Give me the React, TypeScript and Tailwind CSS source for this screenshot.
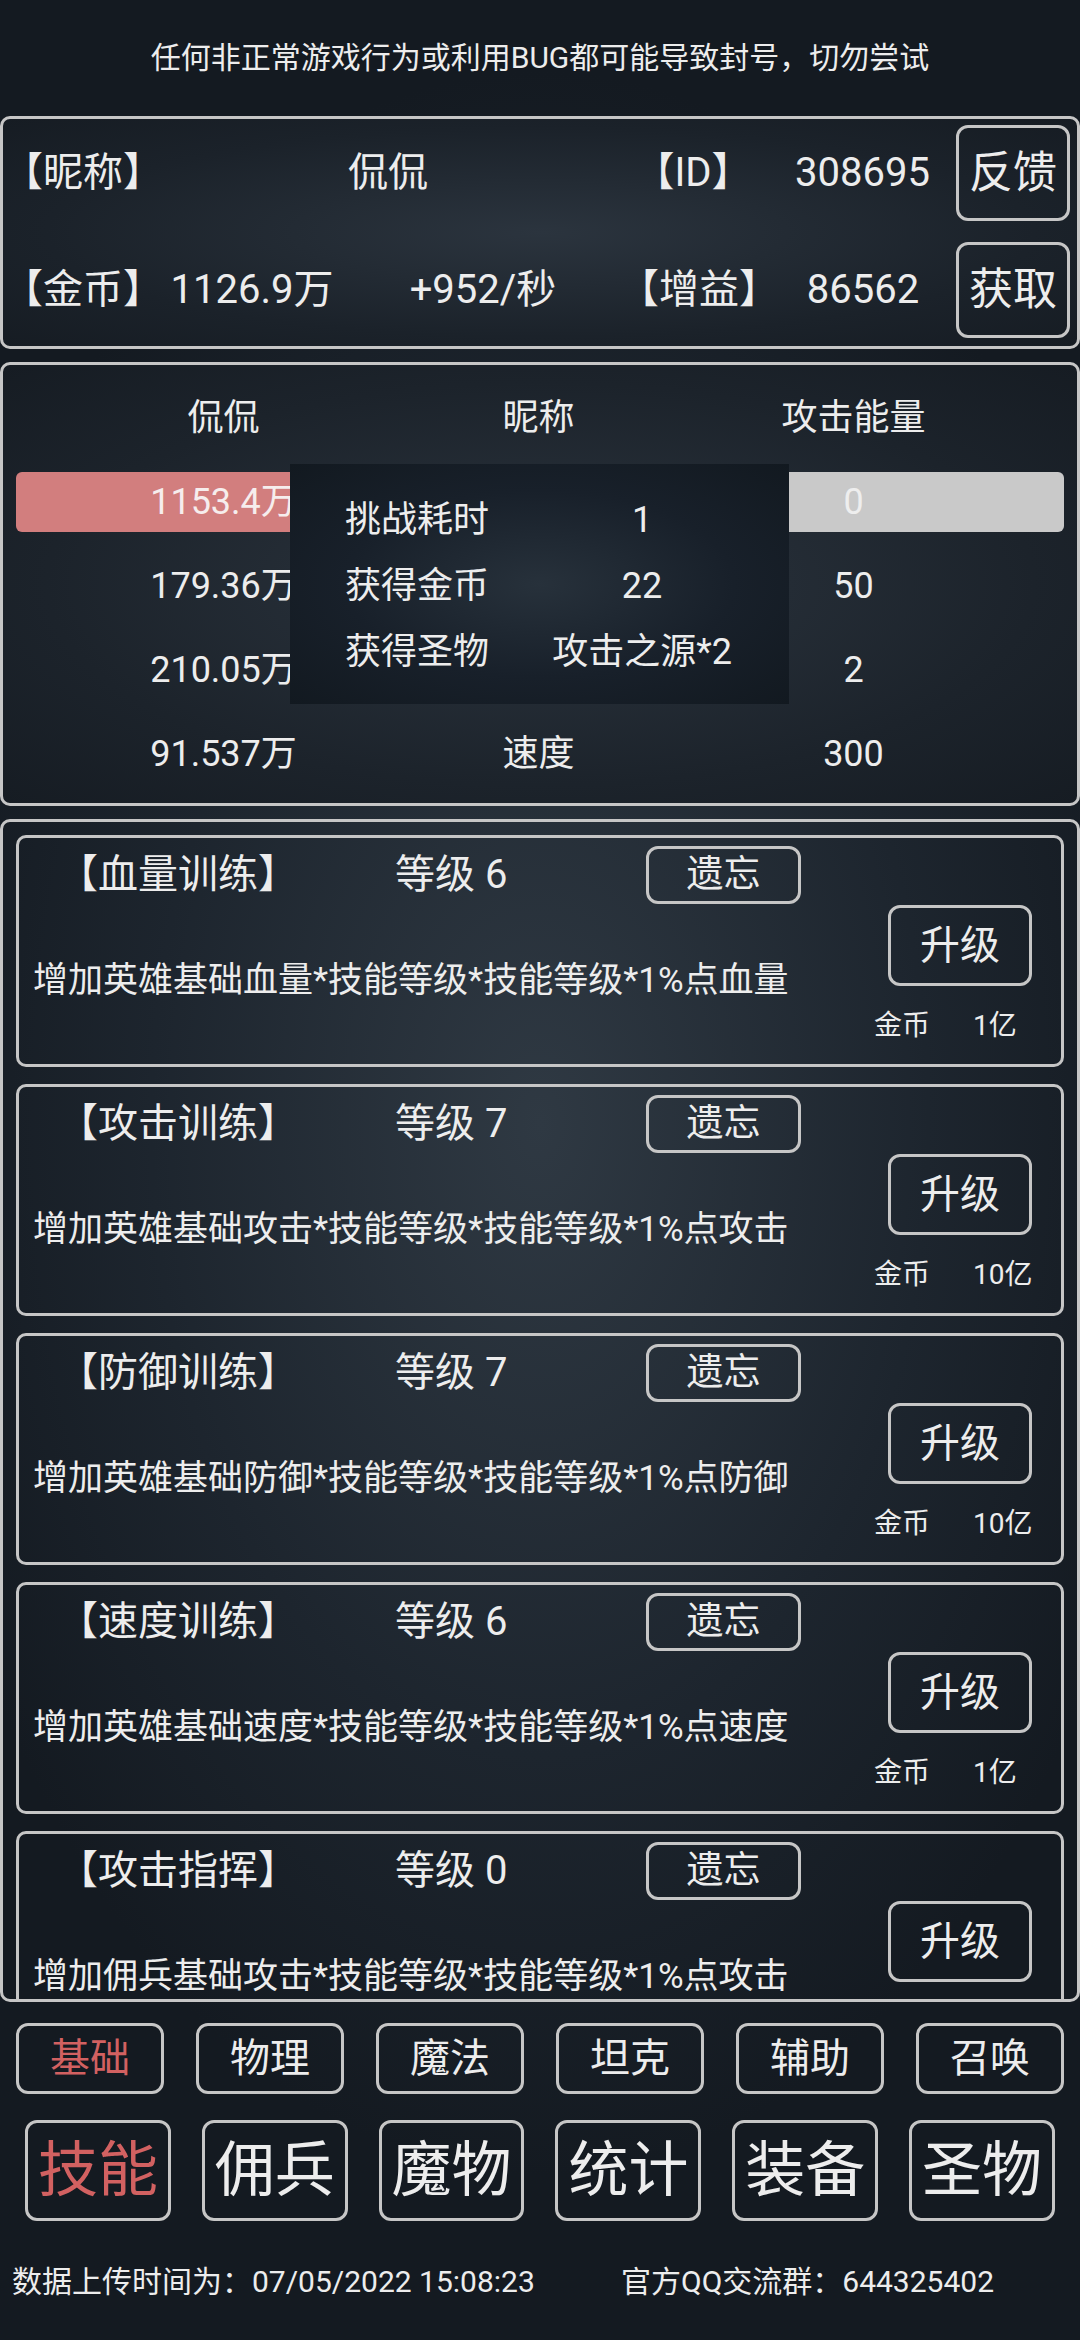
const skills = [
  { name: "【血量训练】", level: 6, desc: "增加英雄基础血量*技能等级*技能等级*1%点血量", cost: "1亿" },
  { name: "【攻击训练】", level: 7, desc: "增加英雄基础攻击*技能等级*技能等级*1%点攻击", cost: "10亿" },
  { name: "【防御训练】", level: 7, desc: "增加英雄基础防御*技能等级*技能等级*1%点防御", cost: "10亿" },
  { name: "【速度训练】", level: 6, desc: "增加英雄基础速度*技能等级*技能等级*1%点速度", cost: "1亿" },
  // cost of the last card sits below the panel edge
  { name: "【攻击指挥】", level: 0, desc: "增加佣兵基础攻击*技能等级*技能等级*1%点攻击", cost: "" },
]

const subTabs = ["基础", "物理", "魔法", "坦克", "辅助", "召唤"]
const mainTabs = ["技能", "佣兵", "魔物", "统计", "装备", "圣物"]

// middle column of these rows is covered by the result popup
const stats = [
  { left: "179.36万", mid: "", right: "50" },
  { left: "210.05万", mid: "", right: "2" },
  { left: "91.537万", mid: "速度", right: "300" },
]

const SkillCard = ({ s }: { s: (typeof skills)[number] }) => (
  <div className="flex h-[232px] shrink-0 flex-col rounded-[10px] border-[3px] border-[#c6c6c6]">
    <div className="mt-[8px] flex h-[58px] items-center">
      <div className="w-[376px] pl-[39px] text-[40px]">{s.name}</div>
      <div className="w-[251px] text-[40px]">等级 {s.level}</div>
      <button className="flex h-[58px] w-[155px] items-center justify-center rounded-[12px] border-[3px] border-[#c6c6c6] text-[37px]">遗忘</button>
    </div>
    <div className="flex">
      <div className="flex-1 pl-[14px] pt-[54px] text-[35px] leading-[46px]">{s.desc}</div>
      <div className="flex w-[190px] flex-col">
        <button className="ml-[17px] mt-[1px] flex h-[81px] w-[144px] items-center justify-center rounded-[12px] border-[3px] border-[#c6c6c6] text-[40px]">升级</button>
        {s.cost && (
          <div className="mt-[22px] flex pl-[3px] text-[28px] leading-[36px]">
            <span>金币</span>
            <span className="ml-[43px]">{s.cost}</span>
          </div>
        )}
      </div>
    </div>
  </div>
)

export default function App() {
  return (
    <div className="flex h-[2340px] w-[1080px] flex-col overflow-hidden bg-[radial-gradient(ellipse_60%_45%_at_50%_48%,#2f3943_0%,#1d252e_60%,#141a21_100%)] font-['Roboto','Noto_Sans_CJK_SC',sans-serif] text-[#ededed]">
      <div className="flex h-[116px] items-center justify-center pb-[2px] text-[30px]">任何非正常游戏行为或利用BUG都可能导致封号，切勿尝试</div>

      <div className="flex h-[233px] flex-col gap-[21px] rounded-[10px] border-[3px] border-[#c6c6c6] bg-[radial-gradient(ellipse_at_50%_50%,#2b343e_0%,#1b222a_65%,#161c23_100%)] pt-[6px] text-[40px]">
        <div className="flex h-[96px] items-center">
          <div className="w-[150px] shrink-0">【昵称】</div>
          <div className="w-[470px] shrink-0 text-center">侃侃</div>
          <div className="w-[140px] shrink-0 text-center">【ID】</div>
          <div className="shrink-0 pl-[32px]">308695</div>
          <button className="ml-auto mr-[7px] flex h-[96px] w-[114px] shrink-0 items-center justify-center rounded-[12px] border-[3px] border-[#c6c6c6] text-[44px]">反馈</button>
        </div>
        <div className="flex h-[96px] items-center">
          <div className="w-[150px] shrink-0">【金币】</div>
          <div className="w-[198px] shrink-0 text-center">1126.9万</div>
          <div className="w-[264px] shrink-0 text-center">+952/秒</div>
          <div className="w-[168px] shrink-0 text-center">【增益】</div>
          <div className="w-[160px] shrink-0 text-center">86562</div>
          <button className="ml-auto mr-[7px] flex h-[96px] w-[114px] shrink-0 items-center justify-center rounded-[12px] border-[3px] border-[#c6c6c6] text-[44px]">获取</button>
        </div>
      </div>

      <div className="relative mt-[13px] flex h-[444px] flex-col rounded-[10px] border-[3px] border-[#c6c6c6] bg-[radial-gradient(ellipse_at_50%_50%,#2c353f_0%,#1c232b_65%,#161c23_100%)] pt-[11px] text-[36px]">
        <div className="flex h-[84px] items-center pl-[63px]">
          <div className="w-[315px] text-center">侃侃</div>
          <div className="w-[315px] text-center">昵称</div>
          <div className="w-[315px] text-center">攻击能量</div>
        </div>
        <div className="flex h-[84px] items-center px-[13px]">
          <div className="flex h-[60px] w-full items-center rounded-[6px] bg-[linear-gradient(to_right,#d27e7e_50%,#c9c9c9_50%)] pl-[50px]">
            <div className="w-[315px] text-center text-[#f6eded]">1153.4万</div>
            <div className="w-[315px]" />
            <div className="w-[315px] text-center text-[#eeeeee]">0</div>
          </div>
        </div>
        {stats.map((r) => (
          <div key={r.left} className="flex h-[84px] items-center pl-[63px]">
            <div className="w-[315px] text-center">{r.left}</div>
            <div className="w-[315px] text-center">{r.mid}</div>
            <div className="w-[315px] text-center">{r.right}</div>
          </div>
        ))}

        <div className="absolute left-[287px] top-[99px] flex h-[240px] w-[499px] flex-col bg-[radial-gradient(ellipse_at_50%_50%,#27313b_0%,#18202a_55%,#121920_100%)] pt-[23px]">
          <div className="flex h-[66px] items-center">
            <div className="w-[205px] pl-[55px]">挑战耗时</div>
            <div className="flex-1 text-center">1</div>
          </div>
          <div className="flex h-[66px] items-center">
            <div className="w-[205px] pl-[55px]">获得金币</div>
            <div className="flex-1 text-center">22</div>
          </div>
          <div className="flex h-[66px] items-center">
            <div className="w-[205px] pl-[55px]">获得圣物</div>
            <div className="flex-1 text-center">攻击之源*2</div>
          </div>
        </div>
      </div>

      <div className="mt-[13px] flex h-[1183px] flex-col gap-[17px] overflow-hidden rounded-[10px] border-[3px] border-[#c6c6c6] px-[13px] pt-[13px]">
        {skills.map((s) => (
          <SkillCard key={s.name} s={s} />
        ))}
      </div>

      <div className="mt-[21px] flex gap-[32px] px-[16px]">
        {subTabs.map((t, i) => (
          <button
            key={t}
            className={`flex h-[71px] w-[148px] items-center justify-center rounded-[12px] border-[3px] border-[#c6c6c6] text-[40px] ${i === 0 ? "text-[#d26161]" : ""}`}
          >
            {t}
          </button>
        ))}
      </div>

      <div className="mt-[26px] flex gap-[31px] px-[25px]">
        {mainTabs.map((t, i) => (
          <button
            key={t}
            className={`flex h-[101px] w-[146px] items-center justify-center rounded-[12px] border-[3px] border-[#c6c6c6] text-[60px] ${i === 0 ? "text-[#d26161]" : ""}`}
          >
            {t}
          </button>
        ))}
      </div>

      <div className="mt-[39px] flex h-[42px] items-center text-[30px]">
        <div className="w-[621px] pl-[12px]">数据上传时间为：07/05/2022 15:08:23</div>
        <div>官方QQ交流群：644325402</div>
      </div>
    </div>
  )
}
